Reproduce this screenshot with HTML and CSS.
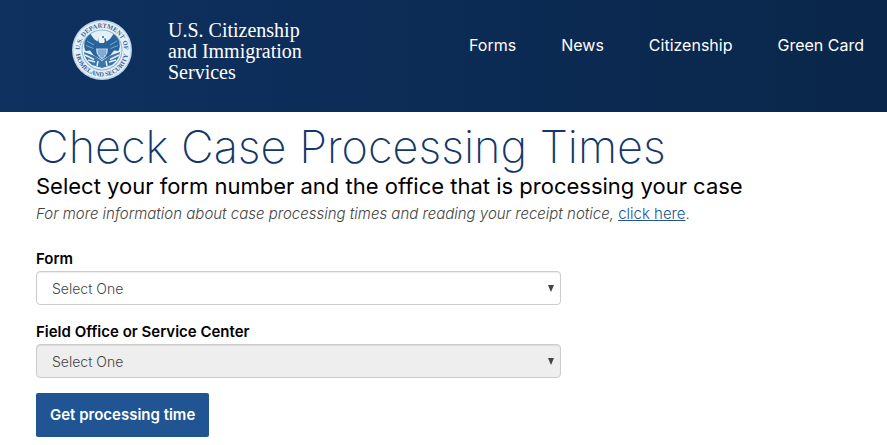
FILE: index.html
```html
<!DOCTYPE html>
<html lang="en">
<head>
    <meta charset="UTF-8">
    <meta name="viewport" content="width=device-width, initial-scale=1.0">
    <title>Check Case Processing Times</title>
    <link rel="stylesheet" href="styles.css">
</head>
<body>
    <header class="site-header">
        <a class="brand" href="#">
            <svg class="seal" viewBox="0 0 120 120" aria-hidden="true">
                <defs>
                    <path id="seal-top" d="M 17 69 A 44 44 0 1 1 103 69"/>
                    <path id="seal-bottom" d="M 7 60 A 53 53 0 0 0 113 60"/>
                </defs>
                <circle cx="60" cy="60" r="60" fill="#b9d2e6"/>
                <circle cx="60" cy="60" r="57" fill="#e4eff7"/>
                <text class="seal-text"><textPath href="#seal-top" startOffset="50%">U.S. DEPARTMENT OF</textPath></text>
                <text class="seal-text"><textPath href="#seal-bottom" startOffset="50%">HOMELAND SECURITY</textPath></text>
                <circle cx="60" cy="60" r="41" fill="#8fb3d2"/>
                <circle cx="60" cy="60" r="39" fill="#e4eff7"/>
                <!-- eagle: tail, wings, head, shield, branch and arrows -->
                <path fill="#3d75a8" d="M24 64 L46 72 L60 82 L74 72 L96 64 Q94 80 80 90 L60 96 L40 90 Q26 80 24 64Z"/>
                <path fill="none" stroke="#e4eff7" stroke-width="3" d="M26 70 L44 79 M32 80 L46 84 M94 70 L76 79 M88 80 L74 84 M52 82 L50 92 M68 82 L70 92"/>
                <path fill="#28649c" d="M25 44 Q29 33 37 28 L44 38 L51 43 L54 34 L66 34 L69 43 L76 38 L83 28 Q91 33 95 44 Q97 54 93 62 L84 61 L77 70 L60 80 L43 70 L36 61 L27 62 Q23 54 25 44Z"/>
                <path fill="none" stroke="#7ba5cb" stroke-width="2" d="M30 42 L44 50 M28 51 L43 57 M90 42 L76 50 M92 51 L77 57"/>
                <path fill="#edf5fb" d="M53 42 Q51 31 60 29 Q67 30 71 36 L64 37 Q67 42 64 46 L55 46Z"/>
                <circle cx="62" cy="34" r="2" fill="#28649c"/>
                <path fill="#b5cee5" d="M48 57 L72 57 L71 66 Q68 74 60 79 Q52 74 49 66Z"/>
                <path fill="none" stroke="#4f85b7" stroke-width="2" d="M54 59 V70 M58 59 V75 M62 59 V75 M66 59 V70"/>
            </svg>
            <span class="brand-name">U.S. Citizenship<br>and Immigration<br>Services</span>
        </a>
        <nav class="main-nav">
            <a href="#">Forms</a>
            <a href="#">News</a>
            <a href="#">Citizenship</a>
            <a href="#">Green Card</a>
        </nav>
    </header>

    <main class="content">
        <h1>Check Case Processing Times</h1>
        <h2>Select your form number and the office that is processing your case</h2>
        <p class="info"><em>For more information about case processing times and reading your receipt notice,</em> <a href="#">click here</a>.</p>

        <form class="case-form">
            <div class="field">
                <label for="form-number">Form</label>
                <select id="form-number">
                    <option>Select One</option>
                </select>
            </div>
            <div class="field">
                <label for="office">Field Office or Service Center</label>
                <select id="office" disabled>
                    <option>Select One</option>
                </select>
            </div>
            <button type="button" class="submit-button">Get processing time</button>
        </form>
    </main>
</body>
</html>
```
FILE: styles.css
```css
* {
    box-sizing: border-box;
}

body {
    margin: 0;
    font-family: Inter, sans-serif;
    font-size: 15px;
    color: #000;
    background-color: #fff;
}

.site-header {
    display: flex;
    justify-content: space-between;
    align-items: flex-start;
    padding: 20px 23px 29px 72px;
    background: linear-gradient(to right, #0e3160, #0a264a);
}

.brand {
    display: flex;
    gap: 36px;
    color: #fff;
    text-decoration: none;
}

.seal {
    width: 60px;
    height: 60px;
}

.seal-text {
    font-family: "Liberation Serif", serif;
    font-size: 13px;
    font-weight: bold;
    fill: #3b6593;
    text-anchor: middle;
}

.brand-name {
    font-family: "Liberation Serif", serif;
    font-size: 20px;
    line-height: 21px;
}

.main-nav {
    display: flex;
    gap: 45px;
    padding-top: 15px;
}

.main-nav a {
    font-size: 16px;
    line-height: 20px;
    color: #fff;
    text-decoration: none;
}

.content {
    padding: 8px 36px;
}

h1 {
    margin: 0;
    font-size: 45px;
    font-weight: 200;
    line-height: 53px;
    color: #14376a;
}

h2 {
    margin: 0;
    font-size: 22px;
    font-weight: 400;
    line-height: 26px;
}

.info {
    margin: 5px 0 23px;
    font-weight: 300;
    line-height: 20px;
    color: #444;
}

.info a {
    color: #205493;
}

.case-form {
    max-width: 525px;
}

.field {
    margin-bottom: 15px;
}

.field label {
    display: block;
    margin-bottom: 1px;
    font-weight: 600;
    line-height: 23px;
}

.field select {
    appearance: none;
    display: block;
    width: 100%;
    height: 34px;
    padding: 0 15px;
    border: 1px solid #ccc;
    border-radius: 4px;
    box-shadow: inset 0 1px 1px rgba(0, 0, 0, 0.08);
    font-family: inherit;
    font-size: 14px;
    font-weight: 300;
    color: #444;
    opacity: 1;
    background: #fff url("data:image/svg+xml,%3Csvg xmlns='http://www.w3.org/2000/svg' width='6' height='7'%3E%3Cpath d='M0 0H6L3 7Z' fill='%23444'/%3E%3C/svg%3E") no-repeat right 6px center;
}

.field select:disabled {
    background-color: #eee;
}

.submit-button {
    padding: 11px 14px;
    border: none;
    border-radius: 2px;
    font-family: inherit;
    font-size: 15px;
    font-weight: 600;
    line-height: 22px;
    color: #fff;
    background-color: #205493;
    cursor: pointer;
}
```
